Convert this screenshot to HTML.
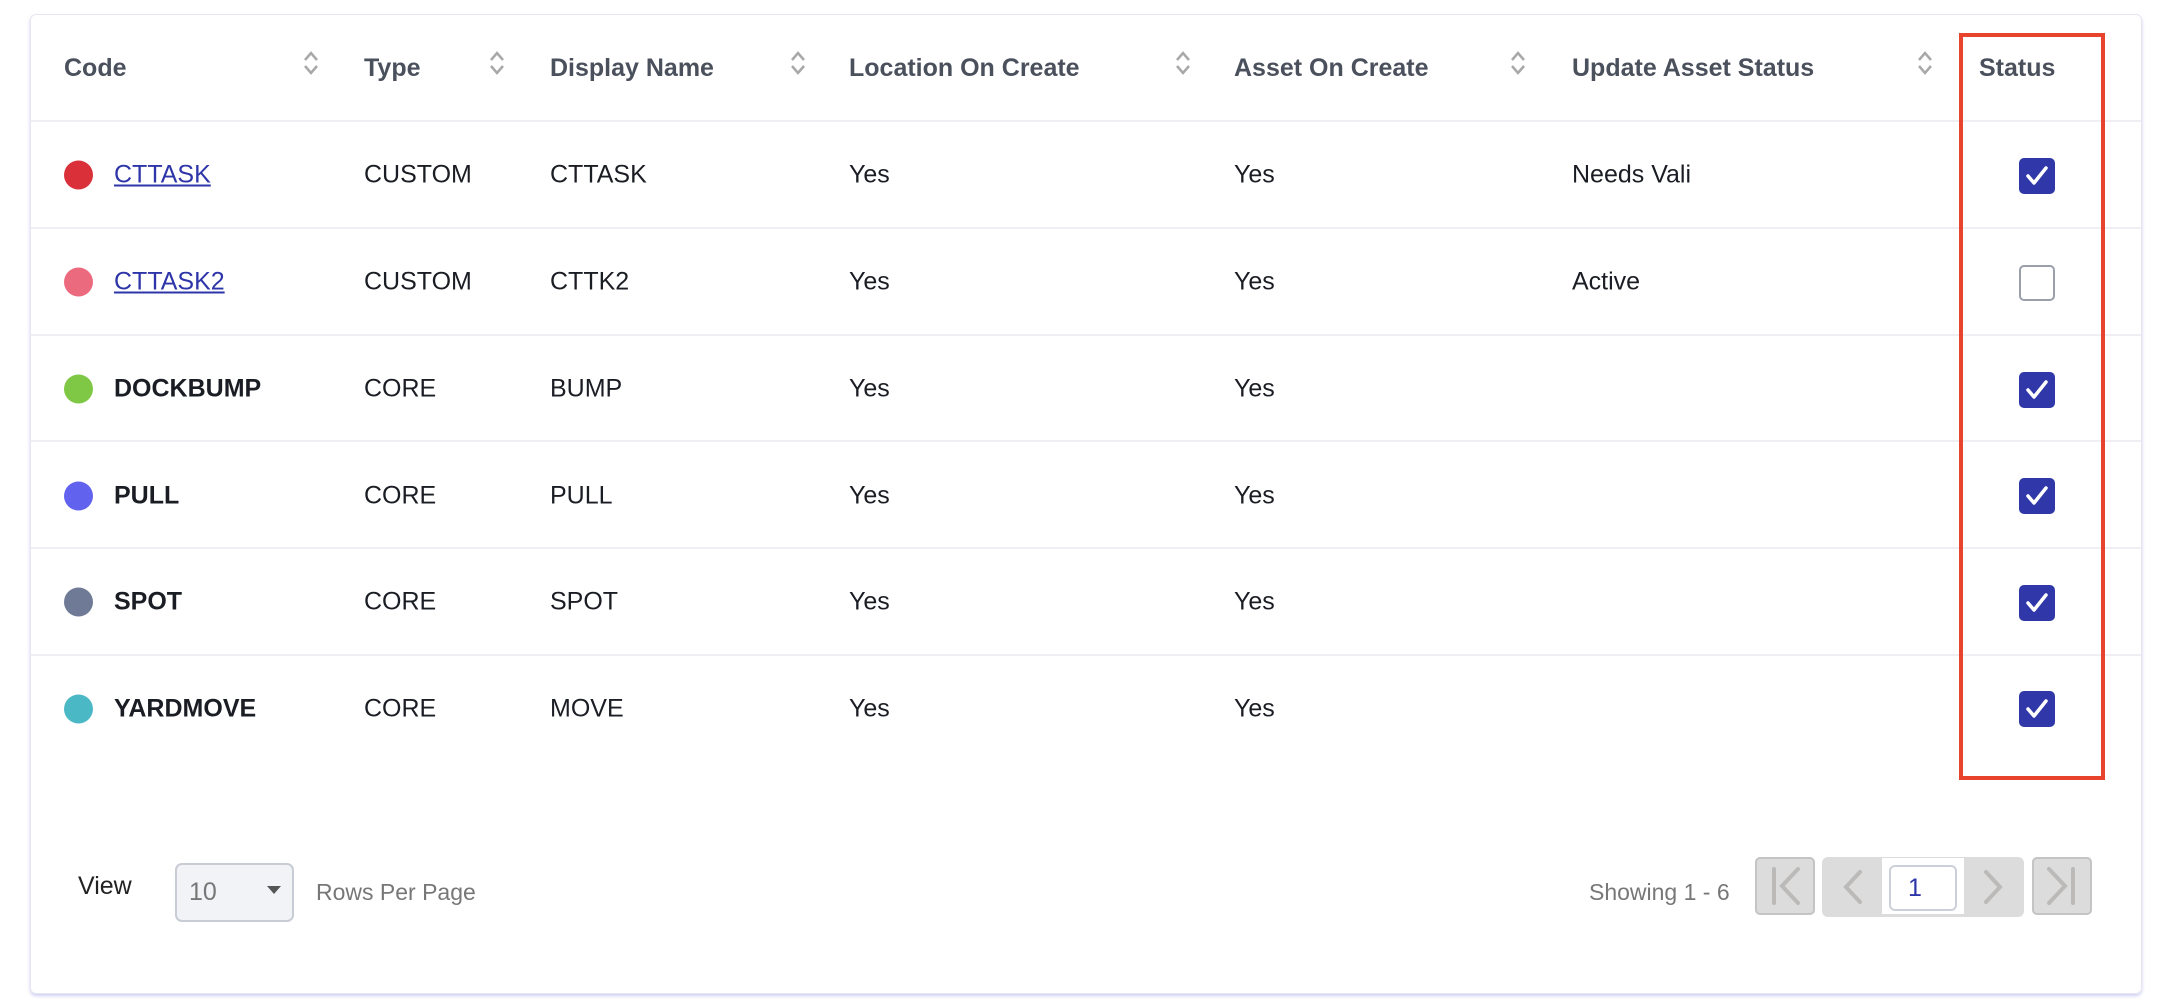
<!DOCTYPE html>
<html><head><meta charset="utf-8"><style>
*{margin:0;padding:0;box-sizing:border-box}
body{width:2165px;height:999px;background:#fff;font-family:"Liberation Sans",Arial,sans-serif;position:relative;overflow:hidden}
.card{position:absolute;left:30px;top:14px;width:2112px;height:980px;border:1px solid #e6e6f2;border-radius:6px;box-shadow:0 2px 3px rgba(120,120,220,.35)}
.a{position:absolute;white-space:nowrap}
.h{font-size:25px;font-weight:bold;color:#4a505c;top:54px}
.c{font-size:25px;color:#1b1d24;transform:translateY(-50%)}
.line{position:absolute;left:31px;width:2110px;height:2px;background:#efeff3}
.dot{position:absolute;width:29px;height:29px;border-radius:50%;left:64px;transform:translateY(-50%)}
.link{color:#2e35a8;text-decoration:underline}
.cb{position:absolute;left:2019px;width:36px;height:36px;border-radius:5px;background:#3037a8;transform:translateY(-50%)}
.cb.off{background:#fff;border:2px solid #9aa0ab}
.sort{position:absolute;top:50px}
.pb{position:absolute;background:#dcdcdc;border:2px solid #c4c4c4;border-radius:5px}
</style></head><body>
<div class="card"></div>

<div class="a h" style="left:64px">Code</div>
<div class="a h" style="left:364px">Type</div>
<div class="a h" style="left:550px">Display Name</div>
<div class="a h" style="left:849px">Location On Create</div>
<div class="a h" style="left:1234px">Asset On Create</div>
<div class="a h" style="left:1572px">Update Asset Status</div>
<div class="a h" style="left:1979px">Status</div>

<svg class="sort" style="left:302px" width="18" height="26" viewBox="0 0 18 26"><path d="M3 10 L9 3 L15 10 M3 16 L9 23 L15 16" fill="none" stroke="#a8a8a8" stroke-width="2.5"/></svg>
<svg class="sort" style="left:488px" width="18" height="26" viewBox="0 0 18 26"><path d="M3 10 L9 3 L15 10 M3 16 L9 23 L15 16" fill="none" stroke="#a8a8a8" stroke-width="2.5"/></svg>
<svg class="sort" style="left:789px" width="18" height="26" viewBox="0 0 18 26"><path d="M3 10 L9 3 L15 10 M3 16 L9 23 L15 16" fill="none" stroke="#a8a8a8" stroke-width="2.5"/></svg>
<svg class="sort" style="left:1174px" width="18" height="26" viewBox="0 0 18 26"><path d="M3 10 L9 3 L15 10 M3 16 L9 23 L15 16" fill="none" stroke="#a8a8a8" stroke-width="2.5"/></svg>
<svg class="sort" style="left:1509px" width="18" height="26" viewBox="0 0 18 26"><path d="M3 10 L9 3 L15 10 M3 16 L9 23 L15 16" fill="none" stroke="#a8a8a8" stroke-width="2.5"/></svg>
<svg class="sort" style="left:1916px" width="18" height="26" viewBox="0 0 18 26"><path d="M3 10 L9 3 L15 10 M3 16 L9 23 L15 16" fill="none" stroke="#a8a8a8" stroke-width="2.5"/></svg>

<div class="line" style="top:120px"></div>
<div class="line" style="top:227px"></div>
<div class="line" style="top:334px"></div>
<div class="line" style="top:440px"></div>
<div class="line" style="top:547px"></div>
<div class="line" style="top:654px"></div>

<div class="dot" style="top:175px;background:#d9303a"></div>
<div class="a c link" style="left:114px;top:175px">CTTASK</div>
<div class="a c" style="left:364px;top:175px">CUSTOM</div>
<div class="a c" style="left:550px;top:175px">CTTASK</div>
<div class="a c" style="left:849px;top:175px">Yes</div>
<div class="a c" style="left:1234px;top:175px">Yes</div>
<div class="a c" style="left:1572px;top:175px">Needs Vali</div>

<div class="dot" style="top:282px;background:#ec6a7e"></div>
<div class="a c link" style="left:114px;top:282px">CTTASK2</div>
<div class="a c" style="left:364px;top:282px">CUSTOM</div>
<div class="a c" style="left:550px;top:282px">CTTK2</div>
<div class="a c" style="left:849px;top:282px">Yes</div>
<div class="a c" style="left:1234px;top:282px">Yes</div>
<div class="a c" style="left:1572px;top:282px">Active</div>

<div class="dot" style="top:389px;background:#7ec845"></div>
<div class="a c" style="left:114px;top:389px;font-weight:bold">DOCKBUMP</div>
<div class="a c" style="left:364px;top:389px">CORE</div>
<div class="a c" style="left:550px;top:389px">BUMP</div>
<div class="a c" style="left:849px;top:389px">Yes</div>
<div class="a c" style="left:1234px;top:389px">Yes</div>

<div class="dot" style="top:496px;background:#6163ee"></div>
<div class="a c" style="left:114px;top:496px;font-weight:bold">PULL</div>
<div class="a c" style="left:364px;top:496px">CORE</div>
<div class="a c" style="left:550px;top:496px">PULL</div>
<div class="a c" style="left:849px;top:496px">Yes</div>
<div class="a c" style="left:1234px;top:496px">Yes</div>

<div class="dot" style="top:602px;background:#6e7a96"></div>
<div class="a c" style="left:114px;top:602px;font-weight:bold">SPOT</div>
<div class="a c" style="left:364px;top:602px">CORE</div>
<div class="a c" style="left:550px;top:602px">SPOT</div>
<div class="a c" style="left:849px;top:602px">Yes</div>
<div class="a c" style="left:1234px;top:602px">Yes</div>

<div class="dot" style="top:709px;background:#4bb8c6"></div>
<div class="a c" style="left:114px;top:709px;font-weight:bold">YARDMOVE</div>
<div class="a c" style="left:364px;top:709px">CORE</div>
<div class="a c" style="left:550px;top:709px">MOVE</div>
<div class="a c" style="left:849px;top:709px">Yes</div>
<div class="a c" style="left:1234px;top:709px">Yes</div>

<svg class="cb" style="top:176px" viewBox="0 0 36 36"><path d="M9 18 L15 25 L27 10" fill="none" stroke="#fff" stroke-width="3.5" stroke-linecap="round" stroke-linejoin="round"/></svg>
<div class="cb off" style="top:283px"></div>
<svg class="cb" style="top:390px" viewBox="0 0 36 36"><path d="M9 18 L15 25 L27 10" fill="none" stroke="#fff" stroke-width="3.5" stroke-linecap="round" stroke-linejoin="round"/></svg>
<svg class="cb" style="top:496px" viewBox="0 0 36 36"><path d="M9 18 L15 25 L27 10" fill="none" stroke="#fff" stroke-width="3.5" stroke-linecap="round" stroke-linejoin="round"/></svg>
<svg class="cb" style="top:603px" viewBox="0 0 36 36"><path d="M9 18 L15 25 L27 10" fill="none" stroke="#fff" stroke-width="3.5" stroke-linecap="round" stroke-linejoin="round"/></svg>
<svg class="cb" style="top:709px" viewBox="0 0 36 36"><path d="M9 18 L15 25 L27 10" fill="none" stroke="#fff" stroke-width="3.5" stroke-linecap="round" stroke-linejoin="round"/></svg>

<div style="position:absolute;left:1959px;top:33px;width:146px;height:747px;border:4px solid #e8432c"></div>

<div class="a" style="left:78px;top:872px;font-size:25px;color:#222">View</div>
<div style="position:absolute;left:175px;top:863px;width:119px;height:59px;background:#f2f3f7;border:2px solid #c8ccd4;border-radius:7px"></div>
<div class="a" style="left:189px;top:878px;font-size:25px;color:#777">10</div>
<svg style="position:absolute;left:266px;top:885px" width="16" height="10"><path d="M1 1 L15 1 L8 9Z" fill="#555"/></svg>
<div class="a" style="left:316px;top:879px;font-size:23px;color:#777">Rows Per Page</div>
<div class="a" style="left:1589px;top:879px;font-size:23px;color:#777">Showing 1 - 6</div>

<div class="pb" style="left:1755px;top:857px;width:60px;height:58px"></div>
<svg style="position:absolute;left:1755px;top:857px" width="60" height="58"><path d="M19 12 V46 M43 12 L27 29 L43 46" fill="none" stroke="#bcbab8" stroke-width="4" stroke-linecap="round"/></svg>
<div style="position:absolute;left:1822px;top:857px;width:202px;height:60px;background:#dcdcdc;border-radius:6px"></div>
<div style="position:absolute;left:1882px;top:858px;width:82px;height:56px;background:#fff"></div>
<svg style="position:absolute;left:1822px;top:857px" width="202" height="60"><path d="M38 15 L24 30 L38 45 M164 15 L178 30 L164 45" fill="none" stroke="#bcbab8" stroke-width="4" stroke-linecap="round"/></svg>
<div style="position:absolute;left:1889px;top:865px;width:68px;height:46px;border:2px solid #ccd0d8;border-radius:6px;background:#fff;color:#2e35a8;font-size:25px;padding:7px 0 0 17px">1</div>
<div class="pb" style="left:2032px;top:857px;width:60px;height:58px"></div>
<svg style="position:absolute;left:2032px;top:857px" width="60" height="58"><path d="M41 12 V46 M17 12 L33 29 L17 46" fill="none" stroke="#bcbab8" stroke-width="4" stroke-linecap="round"/></svg>
</body></html>
